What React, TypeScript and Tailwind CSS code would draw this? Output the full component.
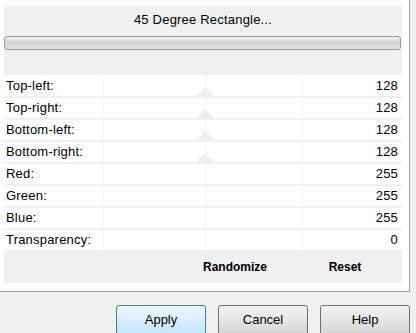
const rows = [
  { label: 'Top-left:', value: 128, mark: true },
  { label: 'Top-right:', value: 128, mark: true },
  { label: 'Bottom-left:', value: 128, mark: true },
  { label: 'Bottom-right:', value: 128, mark: true },
  { label: 'Red:', value: 255, mark: false },
  { label: 'Green:', value: 255, mark: false },
  { label: 'Blue:', value: 255, mark: false },
  { label: 'Transparency:', value: 0, mark: false },
];

const Row = ({ label, value, mark }: { label: string; value: number; mark: boolean }) => (
  <div className="relative flex h-[20px] items-center justify-between bg-white pl-[2px] pr-[4px] leading-[20px] tracking-[0.2px]">
    <span>{label}</span>
    <span>{value}</span>
    <span className="absolute left-[99px] top-0 h-[20px] w-px bg-[#f8f8f8]" />
    <span className="absolute left-[201px] top-0 h-[20px] w-px bg-[#f4f4f4]" />
    <span className="absolute left-[298px] top-0 h-[20px] w-px bg-[#f8f8f8]" />
    {mark && (
      <span className="absolute bottom-0 left-[192px] h-0 w-0 border-x-[9px] border-b-[9px] border-x-transparent border-b-[#efefef]" />
    )}
  </div>
);

const Button = ({ label, primary = false }: { label: string; primary?: boolean }) => (
  <button
    className={
      primary
        ? 'h-[30px] w-[90px] rounded-[3px] border border-[#3c7fb1] bg-gradient-to-b from-[#eaf6fd] via-[#d9f0fc] to-[#bee6fd] text-[13px] text-black'
        : 'h-[30px] w-[90px] rounded-[3px] border border-[#707070] bg-gradient-to-b from-[#f2f2f2] via-[#e6e6e6] to-[#d4d4d4] text-[13px] text-black'
    }
  >
    {label}
  </button>
);

export default function App() {
  return (
    <div className="h-[333px] w-[416px] overflow-hidden bg-[#f0f0f0] font-['Liberation_Sans',Arial,sans-serif] text-[13px] text-black">
      <div className="h-[292px] w-[410px] border-b border-r border-[#a0a0a0] bg-white pl-[4px] pr-[7px] pt-[6px]">
        <div className="h-[69px] bg-[#f0f0f0] pt-[6px]">
          <div className="text-center leading-[16px] tracking-[0.2px]">45 Degree Rectangle...</div>
          <div className="mt-[8px] mr-px h-[14px] rounded-[3px] border border-[#9a9a9a] bg-gradient-to-b from-[#f3f3f3] via-[#d2d2d2] to-[#e4e4e4]" />
        </div>
        <div className="mt-px flex flex-col gap-[2px] bg-[#f0f0f0]">
          {rows.map((r) => (
            <Row key={r.label} {...r} />
          ))}
        </div>
        <div className="flex h-[33px] items-center bg-[#f0f0f0] text-[12px] font-bold">
          <span className="ml-[196px] w-[70px] text-center">Randomize</span>
          <span className="ml-[55px] w-[40px] text-center">Reset</span>
        </div>
      </div>
      <div className="mt-[13px] flex justify-end gap-[12px] pr-[6px]">
        <Button label="Apply" primary />
        <Button label="Cancel" />
        <Button label="Help" />
      </div>
    </div>
  );
}
